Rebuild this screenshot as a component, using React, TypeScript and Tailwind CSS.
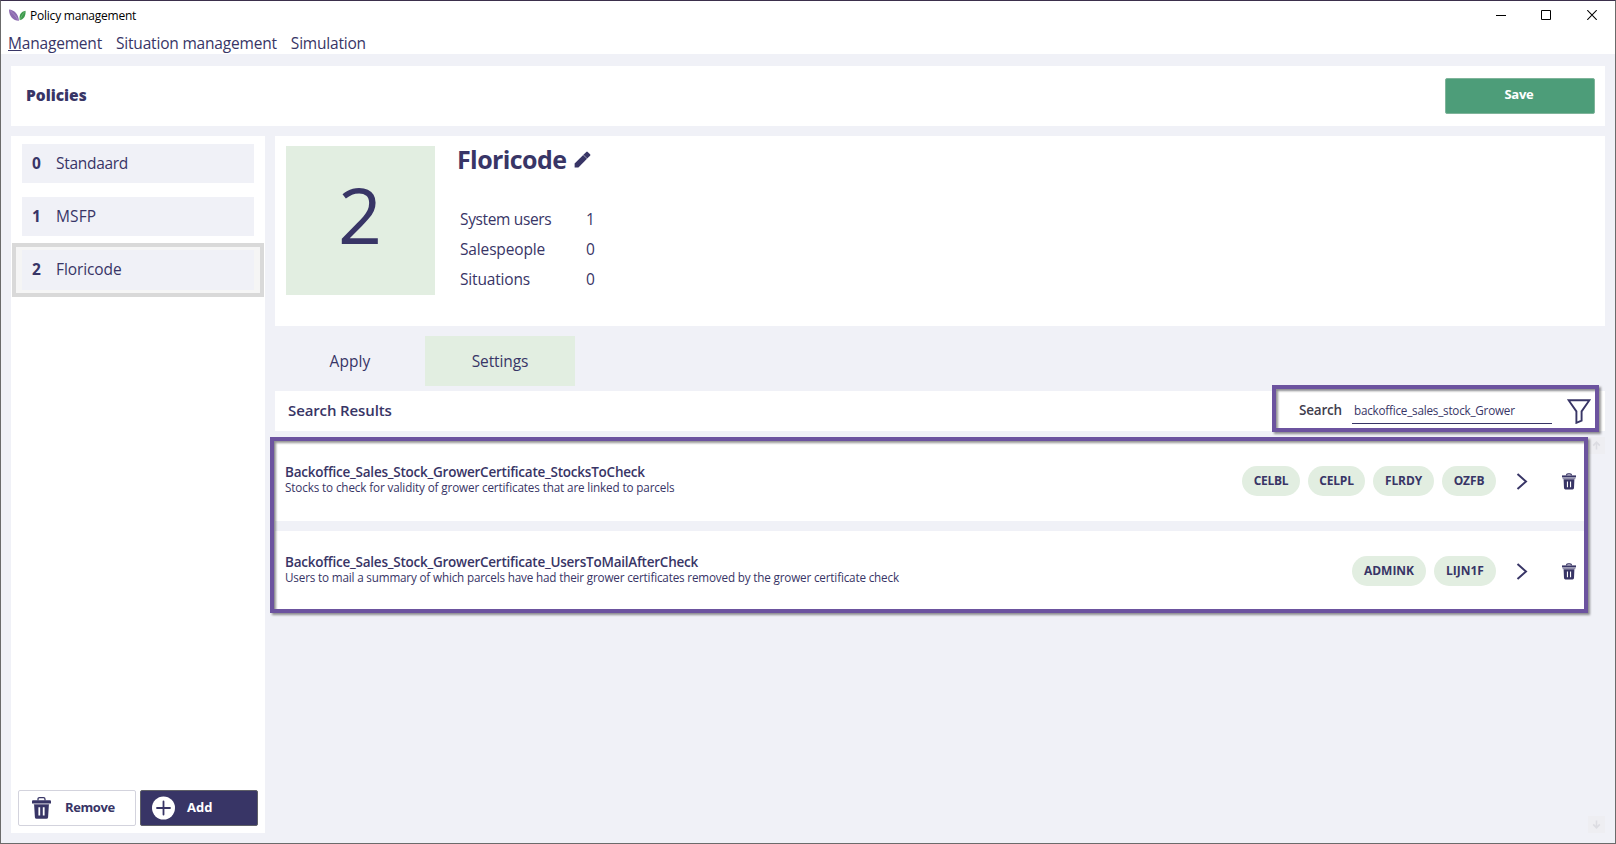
import type { ReactNode } from "react";

type Policy = { id: number; name: string; tracking: string };

const policies: Policy[] = [
  { id: 0, name: "Standaard", tracking: "tracking-[-0.3px]" },
  { id: 1, name: "MSFP", tracking: "tracking-[0.1px]" },
  { id: 2, name: "Floricode", tracking: "tracking-[-0.1px]" },
];

const stats = [
  { label: "System users", value: 1, tracking: "tracking-[-0.36px]" },
  { label: "Salespeople", value: 0, tracking: "tracking-[-0.15px]" },
  { label: "Situations", value: 0, tracking: "tracking-[-0.18px]" },
];

const results = [
  {
    title: "Backoffice_Sales_Stock_GrowerCertificate_StocksToCheck",
    titleTracking: "tracking-[-0.235px]",
    text: "Stocks to check for validity of grower certificates that are linked to parcels",
    textTracking: "tracking-[-0.13px]",
    tags: [
      { label: "CELBL", width: "w-[58px]", tracking: "tracking-[-0.3px]" },
      { label: "CELPL", width: "w-[57px]", tracking: "tracking-[-0.2px]" },
      { label: "FLRDY", width: "w-[61px]", tracking: "tracking-[-0.13px]" },
      { label: "OZFB", width: "w-[54px]", tracking: "tracking-[-0.1px]" },
    ],
  },
  {
    title: "Backoffice_Sales_Stock_GrowerCertificate_UsersToMailAfterCheck",
    titleTracking: "tracking-[-0.238px]",
    text: "Users to mail a summary of which parcels have had their grower certificates removed by the grower certificate check",
    textTracking: "tracking-[-0.17px]",
    tags: [
      { label: "ADMINK", width: "w-[74px]", tracking: "tracking-[0px]" },
      { label: "LIJN1F", width: "w-[62px]", tracking: "tracking-[0px]" },
    ],
  },
];

function Logo() {
  return (
    <svg width="17" height="13" viewBox="0 0 17 13">
      <path d="M0 0.5C5 1 9 4 10 11.8C4.5 12 0 7.5 0 0.5Z" fill="#8d6bb0" />
      <path d="M1 1.5C4 4 7 7.5 9.4 11.4" stroke="#b79fd0" strokeWidth="0.6" fill="none" />
      <path d="M16.5 1.8C12 2.5 9.8 6 10.8 11.2C15 10.5 17 6.5 16.5 1.8Z" fill="#3c9a4c" />
      <path d="M16 2.4C13.6 5 12 8 11 11" stroke="#8cc890" strokeWidth="0.5" fill="none" />
    </svg>
  );
}

function Trash() {
  return (
    <svg width="19" height="22" viewBox="0 0 19 22" fill="#383566">
      <path d="M6 3.4V2.2Q6 0.7 7.5 0.7H11.5Q13 0.7 13 2.2V3.4" fill="none" stroke="#383566" strokeWidth="1.3" />
      <path d="M1 3.2H18Q19 3.2 19 4.2V6.6H0V4.2Q0 3.2 1 3.2Z" />
      <path d="M1.4 6.4H17.6L17.2 7.8H1.8Z" fill="#9896ae" />
      <path
        fillRule="evenodd"
        d="M2.1 7.6H16.9L16.1 20.2Q16 21.8 14.4 21.8H4.6Q3 21.8 2.9 20.2ZM6.4 10.2V18.6H8.2V10.2ZM10.8 10.2V18.6H12.6V10.2Z"
      />
    </svg>
  );
}

function RowTrash() {
  return (
    <svg width="14" height="17" viewBox="0 0 14 17" fill="#383566">
      <path d="M4.4 2.4Q4.6 0.9 6 0.9H8Q9.4 0.9 9.6 2.4" fill="none" stroke="#383566" strokeWidth="1.2" />
      <path d="M0 2.4H14V4.4H0Z" />
      <path d="M0.6 4.4H13.4V6.2H0.6Z" fill="#8e8ca8" />
      <path
        fillRule="evenodd"
        d="M1.6 6.2H12.4L12 15Q11.9 16.4 10.6 16.4H3.4Q2.1 16.4 2 15ZM4.9 8.4V14.2H6V8.4ZM8 8.4V14.2H9.1V8.4Z"
      />
    </svg>
  );
}

function Highlight({ className }: { className: string }) {
  return (
    <div
      className={`pointer-events-none absolute z-10 border-4 border-[#6c539f] [filter:drop-shadow(2px_2px_1px_rgba(0,0,0,0.42))] ${className}`}
    />
  );
}

function Button({ className, children }: { className: string; children: ReactNode }) {
  return (
    <button className={`flex items-center rounded-[2px] border text-[13px] font-bold ${className}`}>{children}</button>
  );
}

export default function App() {
  return (
    <div className="relative flex h-[844px] w-[1616px] flex-col overflow-hidden border border-[#6b6b6b] border-t-[#3b2f4c] bg-[#f0f1f7] font-['Open_Sans',sans-serif] text-[15.5px] leading-5 text-[#383566]">
      <header className="h-[53px] shrink-0 bg-white">
        <div className="flex h-7 items-center justify-between pr-[17px] pl-2">
          <div className="flex items-center gap-1">
            <Logo />
            <span className="pt-[2px] text-[12px] tracking-[-0.22px] text-black">Policy management</span>
          </div>
          <div className="flex items-center gap-[35px]">
            <svg width="10" height="10" viewBox="0 0 10 10">
              <path d="M0 5.5H10" stroke="#000" />
            </svg>
            <svg width="10" height="10" viewBox="0 0 10 10">
              <path d="M0.5 0.5H9.5V9.5H0.5Z" stroke="#000" fill="none" />
            </svg>
            <svg width="12" height="10" viewBox="0 0 12 10">
              <path d="M1.3 0.2L10.7 9.8M10.7 0.2L1.3 9.8" stroke="#000" strokeWidth="1.1" />
            </svg>
          </div>
        </div>
        <nav className="flex h-[25px] items-center gap-[14px] pt-[3px] pl-[7px]">
          <span className="tracking-[-0.19px]">
            <span className="underline decoration-1 underline-offset-1">M</span>anagement
          </span>
          <span className="tracking-[-0.19px]">Situation management</span>
          <span className="tracking-[-0.21px]">Simulation</span>
        </nav>
      </header>

      <div className="mx-2.5 mt-3 flex h-[60px] shrink-0 items-center justify-between bg-white pr-[10px] pl-[15px]">
        <h1 className="pb-[2px] font-extrabold">Policies</h1>
        <Button className="h-9 w-[150px] justify-center border-[#7fb49a] bg-[#4d9d79] pr-[2px] pb-1 tracking-[-0.27px] text-white">
          Save
        </Button>
      </div>

      <div className="mx-2.5 mt-2.5 mb-2.5 flex min-h-0 flex-1 gap-2.5">
        <aside className="flex w-[254px] shrink-0 flex-col justify-between bg-white">
          <div className="flex flex-col px-px pt-[1px]">
            {policies.map((p) => (
              <div
                key={p.id}
                className={
                  p.id === 2
                    ? "flex h-[54px] items-center border-4 border-[#d9d9d9] bg-[#f5f5f5] px-[6px]"
                    : "flex h-[53px] items-center px-[10px]"
                }
              >
                <div
                  className={`flex w-full items-center bg-[#f0f1f7] pl-[10px] ${p.id === 2 ? "h-10 pb-[3px]" : "h-[39px] pb-px"}`}
                >
                  <span className="w-6 text-[15.5px] font-bold">{p.id}</span>
                  <span className={p.tracking}>{p.name}</span>
                </div>
              </div>
            ))}
          </div>
          <div className="flex gap-1 pb-[7px] pl-[7px]">
            <Button className="h-9 w-[118px] gap-[14px] border-[#d3d3dd] bg-white pl-[13px] tracking-[-0.4px]">
              <Trash />
              <span className="pb-[2px]">Remove</span>
            </Button>
            <Button className="h-9 w-[118px] gap-[12px] border-[#5f6067] bg-[#383566] pl-[11px] text-white">
              <svg width="23" height="24" viewBox="0 0 23 24">
                <circle cx="11.5" cy="12" r="11.5" fill="#fff" />
                <path d="M5 12H18M11.5 5.5V18.5" stroke="#383566" strokeWidth="1.8" strokeLinecap="round" />
              </svg>
              <span className="pb-[2px]">Add</span>
            </Button>
          </div>
        </aside>

        <main className="flex min-w-0 flex-1 flex-col">
          <section className="flex h-[190px] shrink-0 bg-white pt-[10px] pl-[11px]">
            <div className="flex h-[149px] w-[149px] items-center justify-center bg-[#e2eee1] pr-px pb-[12px] text-[77px] leading-none">
              2
            </div>
            <div className="pl-[22px]">
              <div className="flex h-[26px] items-center gap-[8px]">
                <h2 className="text-[25px] font-bold tracking-[-0.6px]">Floricode</h2>
                <svg width="17" height="17" viewBox="0 0 17 17" fill="#383566">
                  <path d="M0.6 16.4V12.6L9.2 4L13 7.8L4.4 16.4Z" />
                  <path d="M9.4 3.8L12.3 0.9Q13 0.3 13.7 0.9L16.1 3.3Q16.7 4 16.1 4.7L13.2 7.6Z" />
                </svg>
              </div>
              <dl className="mt-8 pl-[3px]">
                {stats.map((s) => (
                  <div key={s.label} className="flex h-[30px] items-center">
                    <dt className={`w-[126px] ${s.tracking}`}>{s.label}</dt>
                    <dd>{s.value}</dd>
                  </div>
                ))}
              </dl>
            </div>
          </section>

          <div className="mt-2.5 flex h-[50px] shrink-0">
            <div className="flex w-[150px] items-center justify-center pb-px tracking-[0.1px]">Apply</div>
            <div className="flex w-[150px] items-center justify-center bg-[#e2eee1] pb-px tracking-[-0.1px]">
              Settings
            </div>
          </div>

          <section className="mt-[5px] flex h-10 shrink-0 items-center justify-between bg-white pr-[14px] pl-[13px]">
            <h3 className="pb-[2px] text-[15px] font-semibold tracking-[-0.12px]">Search Results</h3>
            <div className="flex items-center">
              <span className="w-[53px] pb-[2px] text-[13.5px] font-semibold tracking-[-0.19px] text-[#3f3d4c]">
                Search
              </span>
              <span className="mt-[2px] flex h-6 w-[200px] items-center border-b border-[#383566] pb-[4px] pl-[2px] text-[11.7px] tracking-[-0.22px]">
                backoffice_sales_stock_Grower
              </span>
              <svg className="ml-[15px]" width="24" height="25" viewBox="0 0 24 25">
                <path
                  d="M1.6 1.2H22.4L14.6 12.4V21.6L9.4 23.8V12.4Z"
                  fill="none"
                  stroke="#383566"
                  strokeWidth="1.9"
                />
              </svg>
            </div>
          </section>

          <section className="mt-1.5 flex min-h-0 flex-1 justify-between">
            <div className="flex w-[1309px] flex-col gap-2.5 pt-1">
              {results.map((r) => (
                <article key={r.title} className="flex h-20 items-center justify-between bg-white pr-[8px] pl-[10px]">
                  <div className="pb-[3px]">
                    <h4 className={`text-[13.5px] leading-4 font-semibold ${r.titleTracking}`}>{r.title}</h4>
                    <p className={`text-[11.7px] leading-[15px] ${r.textTracking}`}>{r.text}</p>
                  </div>
                  <div className="flex items-center">
                    <div className="flex gap-2">
                      {r.tags.map((t) => (
                        <span
                          key={t.label}
                          className={`flex h-[30px] items-center justify-center rounded-full bg-[#e2eee1] pb-px text-[12px] font-bold ${t.width} ${t.tracking}`}
                        >
                          {t.label}
                        </span>
                      ))}
                    </div>
                    <svg className="ml-5" width="12" height="17" viewBox="0 0 12 17">
                      <path d="M1.5 1L10 8.5L1.5 16" fill="none" stroke="#383566" strokeWidth="2" />
                    </svg>
                    <span className="ml-[34px]">
                      <RowTrash />
                    </span>
                  </div>
                </article>
              ))}
            </div>
            <div className="flex w-[17px] flex-col justify-between text-[#dcdce2]">
              {["up", "down"].map((dir) => (
                <span key={dir} className="flex h-[17px] items-center justify-center bg-[#eeeef2]">
                  <svg width="9" height="9" viewBox="0 0 9 9" className={dir === "down" ? "rotate-180" : ""}>
                    <path d="M4.5 8.5V1.5M1.2 4.6L4.5 1.2L7.8 4.6" fill="none" stroke="currentColor" strokeWidth="1.6" />
                  </svg>
                </span>
              ))}
            </div>
          </section>
        </main>
      </div>

      <Highlight className="top-[384px] left-[1271px] h-[47px] w-[327px]" />
      <Highlight className="top-[436px] left-[269px] h-[176px] w-[1318px]" />
    </div>
  );
}
